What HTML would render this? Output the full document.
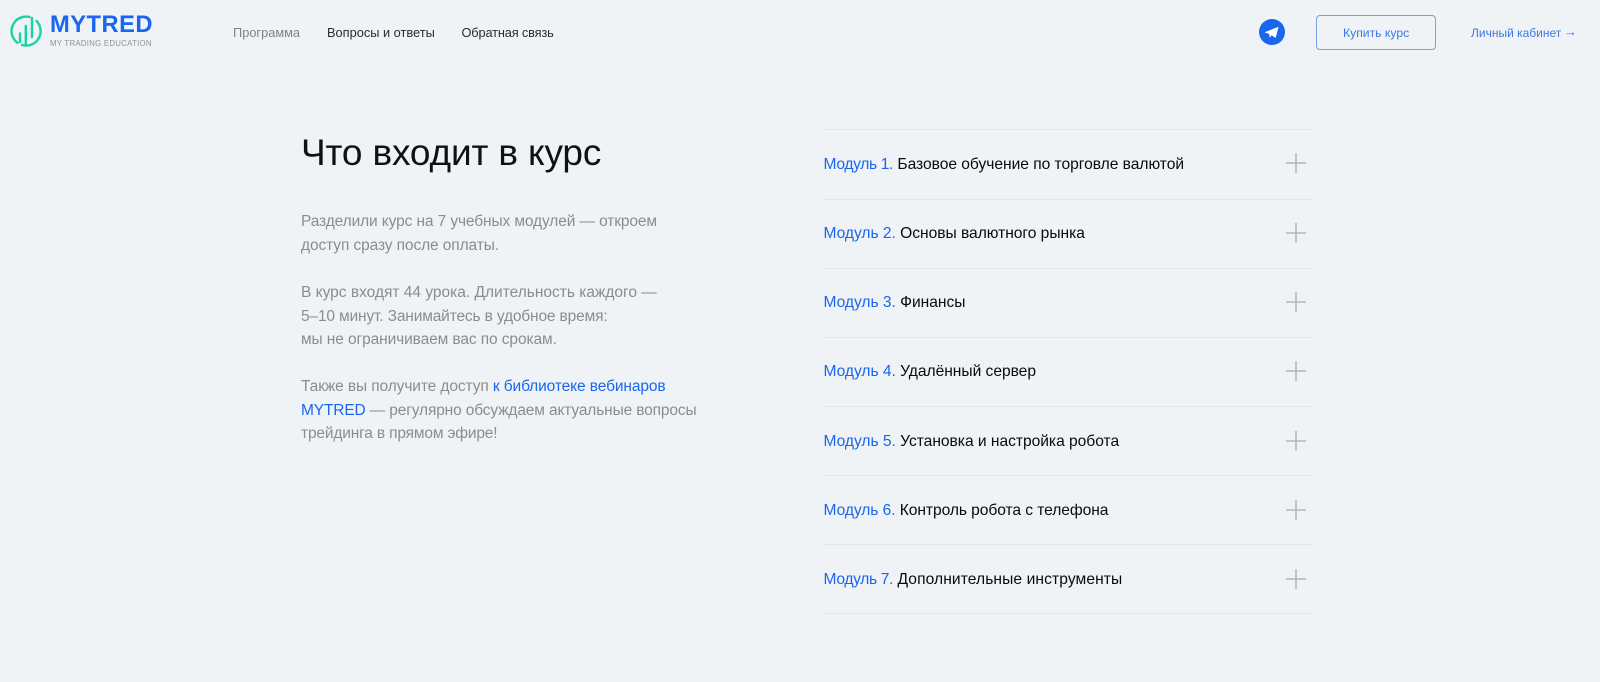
<!DOCTYPE html>
<html lang="ru"><head><meta charset="utf-8"><title>MYTRED</title>
<style>
html,body{margin:0;padding:0}
body{width:1600px;height:682px;background:#eff3f6;overflow:hidden;position:relative;font-family:"Liberation Sans",sans-serif}
.t{position:absolute;white-space:nowrap}
.nav{font-size:12.8px;line-height:16px;top:25px}
.p{left:301px;font-size:15.5px;line-height:23.6px;color:#8c8c8c}
.p a{color:#1a66ee;text-decoration:none}
.line{position:absolute;left:824px;width:489px;height:1px;background:#e2e6e9}
.m{left:823.5px;font-size:15.6px;line-height:20px;color:#0a0a0a;letter-spacing:-.03px}
.m b{font-weight:400;color:#1a66ee}
.plus{position:absolute;left:1285.5px;width:20px;height:20px}
</style></head><body>
<svg style="position:absolute;left:0;top:0" width="60" height="60" viewBox="0 0 60 60" fill="none">
<g stroke="#18d2a4" stroke-width="2.4" stroke-linecap="round">
<path d="M29.5 17A14.5 14.5 0 0 0 17.5 42.8"/>
<path d="M36.5 21A14.5 14.5 0 0 1 22 45"/>
<path d="M20 33.5V42M25.8 26V45M32 18V37"/>
</g>
</svg>
<div class="t" style="left:50px;top:12px;font-size:23.7px;line-height:26px;font-weight:700;color:#1a66ee;letter-spacing:.5px">MYTRED</div>
<div class="t" style="left:50px;top:39px;font-size:7.8px;line-height:10px;color:#8e9196;letter-spacing:.28px">MY TRADING EDUCATION</div>
<div class="t nav" style="left:233px;color:#7f8184">Программа</div>
<div class="t nav" style="left:327px;color:#2b2b2b">Вопросы и ответы</div>
<div class="t nav" style="left:461.5px;color:#2b2b2b;letter-spacing:-.15px">Обратная связь</div>
<svg style="position:absolute;left:1259px;top:18.5px" width="26" height="26" viewBox="0 0 26 26">
<circle cx="13" cy="13" r="13" fill="#1a66ee"/>
<path d="M5.5 13.3 19.6 7.8 16.6 19 12.6 16.2 10.7 18.6 10.2 15Z" fill="#fff"/>
</svg>
<div style="position:absolute;left:1316px;top:15px;width:118px;height:33px;border:1px solid #7aa0ea;border-radius:4px"></div>
<div class="t" style="left:1343px;top:25px;font-size:12.2px;line-height:16px;color:#3f78e0">Купить курс</div>
<div class="t" style="left:1471px;top:25px;font-size:12px;line-height:16px;color:#3f78e0">Личный кабинет</div>
<div class="t" style="left:1564px;top:24px;font-size:13px;line-height:16px;color:#3f78e0">→</div>
<div class="t" style="left:301px;top:130px;font-size:37px;line-height:46px;color:#111;letter-spacing:-.15px">Что входит в курс</div>
<div class="t p" style="top:210px"><span style="letter-spacing:-.11px">Разделили курс на 7 учебных модулей — откроем</span><br><span style="letter-spacing:-.1px">доступ сразу после оплаты.</span></div>
<div class="t p" style="top:281px">В курс входят 44 урока. Длительность каждого —<br><span style="letter-spacing:-.15px">5–10 минут. Занимайтесь в удобное время:</span><br><span style="letter-spacing:-.1px">мы не ограничиваем вас по срокам.</span></div>
<div class="t p" style="top:375px"><span style="letter-spacing:-.1px">Также вы получите доступ <a>к библиотеке вебинаров</a></span><br><span style="letter-spacing:-.14px"><a>MYTRED</a> — регулярно обсуждаем актуальные вопросы</span><br><span style="letter-spacing:-.16px">трейдинга в прямом эфире!</span></div>
<div class="line" style="top:129px"></div>
<div class="line" style="top:199px"></div>
<div class="line" style="top:268px"></div>
<div class="line" style="top:337px"></div>
<div class="line" style="top:406px"></div>
<div class="line" style="top:475px"></div>
<div class="line" style="top:544px"></div>
<div class="line" style="top:613px"></div>
<div class="t m" style="top:155px"><b style="letter-spacing:-.34px">Модуль 1.</b> Базовое обучение по торговле валютой</div>
<div class="t m" style="top:224px"><b>Модуль 2.</b> Основы валютного рынка</div>
<div class="t m" style="top:293px"><b>Модуль 3.</b> Финансы</div>
<div class="t m" style="top:362px"><b>Модуль 4.</b> Удалённый сервер</div>
<div class="t m" style="top:432px"><b>Модуль 5.</b> Установка и настройка робота</div>
<div class="t m" style="top:501px;letter-spacing:-.07px"><b>Модуль 6.</b> Контроль робота с телефона</div>
<div class="t m" style="top:570px;letter-spacing:.09px"><b style="letter-spacing:-.34px">Модуль 7.</b> Дополнительные инструменты</div>
<svg class="plus" style="top:153px" viewBox="0 0 20 20"><path d="M0 10H20M10 0V20" stroke="#b5b8bb" stroke-width="1.6"/></svg>
<svg class="plus" style="top:223px" viewBox="0 0 20 20"><path d="M0 10H20M10 0V20" stroke="#b5b8bb" stroke-width="1.6"/></svg>
<svg class="plus" style="top:292px" viewBox="0 0 20 20"><path d="M0 10H20M10 0V20" stroke="#b5b8bb" stroke-width="1.6"/></svg>
<svg class="plus" style="top:361px" viewBox="0 0 20 20"><path d="M0 10H20M10 0V20" stroke="#b5b8bb" stroke-width="1.6"/></svg>
<svg class="plus" style="top:431px" viewBox="0 0 20 20"><path d="M0 10H20M10 0V20" stroke="#b5b8bb" stroke-width="1.6"/></svg>
<svg class="plus" style="top:500px" viewBox="0 0 20 20"><path d="M0 10H20M10 0V20" stroke="#b5b8bb" stroke-width="1.6"/></svg>
<svg class="plus" style="top:569px" viewBox="0 0 20 20"><path d="M0 10H20M10 0V20" stroke="#b5b8bb" stroke-width="1.6"/></svg>
</body></html>
